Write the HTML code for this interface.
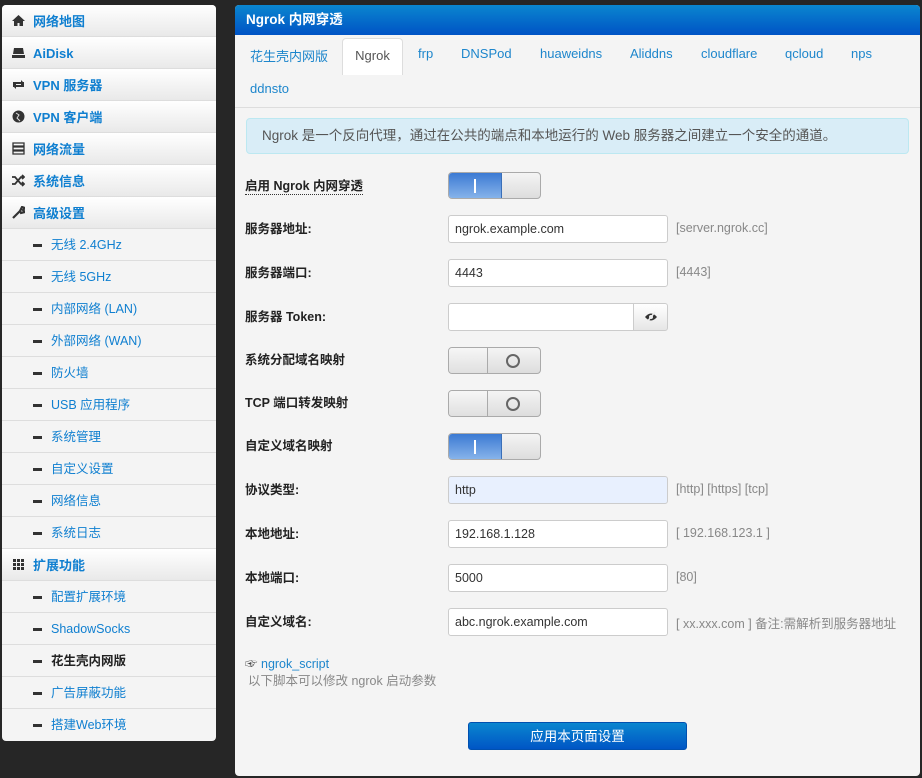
<!DOCTYPE html>
<html><head><meta charset="utf-8"><style>
*{box-sizing:border-box;margin:0;padding:0}
body{width:922px;height:778px;background:#262626;font-family:"Liberation Sans","Noto Sans CJK SC",sans-serif;font-size:13px;position:relative;overflow:hidden}
.side{position:absolute;left:2px;top:5px;width:214px;background:#f4f4f4;border-radius:4px;overflow:hidden}
.side div{height:32px;border-bottom:1px solid #ddd;line-height:33px;color:#0f7fd0;position:relative}
.side .top{background:linear-gradient(#fff,#e9e9e9);font-weight:bold;padding-left:31px}
.side .sub{padding-left:49px;font-size:12.5px}
.side .sub:before{content:"";position:absolute;left:31px;top:15px;width:9px;height:3px;background:#333}
.side .cur{color:#222;font-weight:bold}
.ic{position:absolute;left:10px;top:9px;width:13px;height:13px}
.main{position:absolute;left:235px;top:5px;width:685px;height:771px;background:#f4f4f4;border-radius:4px;overflow:hidden}
.hdr{height:30px;background:linear-gradient(#0a86cf,#0053c5);color:#fff;font-weight:bold;font-size:13.5px;line-height:29px;padding-left:11px}
.tabs{position:absolute;top:33px;left:0;width:685px;height:70px;border-bottom:1px solid #ddd}
.tab{position:absolute;color:#1d86cc;font-size:13px}
.tabon{position:absolute;left:107px;top:0;width:61px;height:37px;background:#fff;border:1px solid #ddd;border-bottom:none;border-radius:4px 4px 0 0;color:#555;text-align:center;line-height:34px}
.alert{position:absolute;left:11px;top:113px;width:663px;height:36px;background:#d9edf7;border:1px solid #bce8f1;border-radius:4px;color:#555;line-height:34px;padding-left:15px;font-size:13.5px}
.lbl{position:absolute;left:10px;color:#222;font-weight:bold;font-size:12.5px}
.inp{position:absolute;left:213px;width:220px;height:28px;background:#fff;border:1px solid #ccc;border-radius:3px;padding-left:6px;line-height:26px;color:#333;font-size:12.5px}
.hint{position:absolute;left:441px;color:#888;font-size:12.5px}
.tg{position:absolute;left:213px;width:93px;height:27px;border:1px solid #aaa;border-radius:4px;overflow:hidden;background:linear-gradient(#f4f4f4,#ddd)}
.tg .on{position:absolute;left:0;top:0;width:53px;height:100%;background:linear-gradient(#3c7ad3,#86b3ea);border-right:1px solid #3a6fb8}
.tg .on:after{content:"";position:absolute;left:25px;top:6px;width:2px;height:14px;background:#fff}
.tg .offk{position:absolute;left:0;top:0;width:39px;height:100%;border-right:1px solid #aaa;background:linear-gradient(#f6f6f6,#e0e0e0)}
.tg .circ{position:absolute;left:57px;top:6px;width:14px;height:14px;border:2px solid #666;border-radius:50%}
.btn{position:absolute;left:233px;top:717px;width:219px;height:28px;border-radius:3px;background:linear-gradient(#0a86cf,#0055c5);color:#fff;text-align:center;line-height:27px;font-size:13.5px;border:1px solid #0050b0}
</style></head><body>
<div class="side">
<div class="top"><svg class="ic" viewBox="0 0 13 13"><path d="M6.5 1L0 7h2v5h3.5V9h2v3H11V7h2z" fill="#333"/></svg>网络地图</div>
<div class="top"><svg class="ic" viewBox="0 0 13 13"><path d="M2 2h9l1 6H1z M0 9h13v3H0z" fill="#333"/></svg>AiDisk</div>
<div class="top"><svg class="ic" viewBox="0 0 13 13"><path d="M1 4h8v-2l3 3-3 3V6H3v3H1z M12 9H4v2L1 8l3-3v2h6V4h2z" fill="#333"/></svg>VPN 服务器</div>
<div class="top"><svg class="ic" viewBox="0 0 13 13"><circle cx="6.5" cy="6.5" r="6" fill="#333"/><path d="M4 3l3 2-2 3 3 3" stroke="#ddd" fill="none"/></svg>VPN 客户端</div>
<div class="top"><svg class="ic" viewBox="0 0 13 13"><path d="M1 1h11v3H1zM1 5h11v3H1zM1 9h11v3H1z" fill="none" stroke="#333" stroke-width="1.3"/></svg>网络流量</div>
<div class="top"><svg class="ic" viewBox="0 0 13 13"><path d="M0 3h3l6 7h3M0 10h3l6-7h3M10 1l2 2-2 2M10 8l2 2-2 2" stroke="#333" stroke-width="1.8" fill="none"/></svg>系统信息</div>
<div class="top"><svg class="ic" viewBox="0 0 13 13"><path d="M1 12l7-7M8 5l2-4 3 1-2 2 2 2-4 1z" stroke="#333" stroke-width="2.2" fill="none"/></svg>高级设置</div>
<div class="sub">无线 2.4GHz</div>
<div class="sub">无线 5GHz</div>
<div class="sub">内部网络 (LAN)</div>
<div class="sub">外部网络 (WAN)</div>
<div class="sub">防火墙</div>
<div class="sub">USB 应用程序</div>
<div class="sub">系统管理</div>
<div class="sub">自定义设置</div>
<div class="sub">网络信息</div>
<div class="sub">系统日志</div>
<div class="top"><svg class="ic" viewBox="0 0 13 13"><path d="M1 1h3v3H1zM5 1h3v3H5zM9 1h3v3H9zM1 5h3v3H1zM5 5h3v3H5zM9 5h3v3H9zM1 9h3v3H1zM5 9h3v3H5zM9 9h3v3H9z" fill="#333"/></svg>扩展功能</div>
<div class="sub">配置扩展环境</div>
<div class="sub">ShadowSocks</div>
<div class="sub cur">花生壳内网版</div>
<div class="sub">广告屏蔽功能</div>
<div class="sub" style="border-bottom:none">搭建Web环境</div>
</div>
<div class="main">
<div class="hdr">Ngrok 内网穿透</div>
<div class="tabs">
<span class="tab" style="left:15px;top:8px">花生壳内网版</span>
<div class="tabon">Ngrok</div>
<span class="tab" style="left:183px;top:8px">frp</span>
<span class="tab" style="left:226px;top:8px">DNSPod</span>
<span class="tab" style="left:305px;top:8px">huaweidns</span>
<span class="tab" style="left:395px;top:8px">Aliddns</span>
<span class="tab" style="left:466px;top:8px">cloudflare</span>
<span class="tab" style="left:550px;top:8px">qcloud</span>
<span class="tab" style="left:616px;top:8px">nps</span>
<span class="tab" style="left:15px;top:43px">ddnsto</span>
</div>
<div class="alert">Ngrok 是一个反向代理，通过在公共的端点和本地运行的 Web 服务器之间建立一个安全的通道。</div>
<div class="lbl" style="top:170px;border-bottom:1px dotted #333">启用 Ngrok 内网穿透</div>
<div class="tg" style="top:167px"><div class="on"></div></div>
<div class="lbl" style="top:213px">服务器地址:</div>
<div class="inp" style="top:210px">ngrok.example.com</div><div class="hint" style="top:216px">[server.ngrok.cc]</div>
<div class="lbl" style="top:257px">服务器端口:</div>
<div class="inp" style="top:254px">4443</div><div class="hint" style="top:260px">[4443]</div>
<div class="lbl" style="top:301px">服务器 Token:</div>
<div class="inp" style="top:298px;width:186px;border-radius:3px 0 0 3px"></div>
<div style="position:absolute;left:398px;top:298px;width:35px;height:28px;border:1px solid #ccc;border-radius:0 3px 3px 0;background:linear-gradient(#fff,#e6e6e6)"><svg style="position:absolute;left:10px;top:7px" width="14" height="12" viewBox="0 0 14 12"><path d="M1 6q6-7 12 0q-6 7-12 0z" fill="#333"/><circle cx="7" cy="6" r="2" fill="#eee"/><path d="M3 11L11 1" stroke="#eee" stroke-width="1.5"/></svg></div>
<div class="lbl" style="top:344px">系统分配域名映射</div>
<div class="tg" style="top:342px"><div class="offk"></div><div class="circ"></div></div>
<div class="lbl" style="top:387px">TCP 端口转发映射</div>
<div class="tg" style="top:385px"><div class="offk"></div><div class="circ"></div></div>
<div class="lbl" style="top:430px">自定义域名映射</div>
<div class="tg" style="top:428px"><div class="on"></div></div>
<div class="lbl" style="top:474px">协议类型:</div>
<div class="inp" style="top:471px;background:#e8f0fe">http</div><div class="hint" style="top:477px">[http] [https] [tcp]</div>
<div class="lbl" style="top:518px">本地地址:</div>
<div class="inp" style="top:515px">192.168.1.128</div><div class="hint" style="top:521px">[ 192.168.123.1 ]</div>
<div class="lbl" style="top:562px">本地端口:</div>
<div class="inp" style="top:559px">5000</div><div class="hint" style="top:565px">[80]</div>
<div class="lbl" style="top:606px">自定义域名:</div>
<div class="inp" style="top:603px">abc.ngrok.example.com</div><div class="hint" style="top:608px">[ xx.xxx.com ] 备注:需解析到服务器地址</div>
<div style="position:absolute;left:10px;top:648px;font-size:12.5px;color:#1d86cc"><span style="color:#333">☞</span> ngrok_script</div>
<div style="position:absolute;left:13px;top:665px;font-size:12.5px;color:#888">以下脚本可以修改 ngrok 启动参数</div>
<div class="btn">应用本页面设置</div>
</div>
</body></html>
